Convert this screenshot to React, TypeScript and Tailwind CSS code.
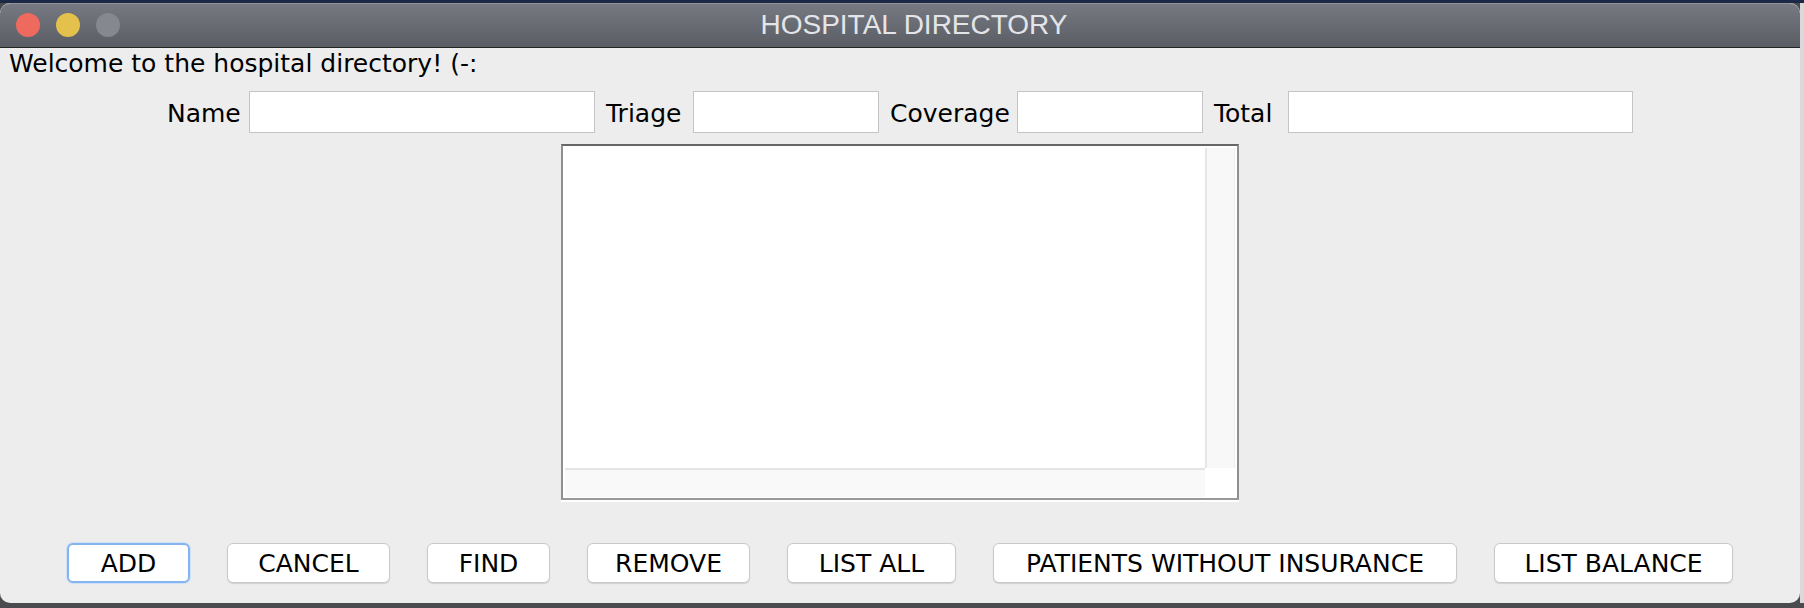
const font = "font-['DejaVu_Sans','Lucida_Grande',sans-serif]";

type Field = {
  label: string;
  labelWidth: string;
  fieldWidth: string;
};

const fields: Field[] = [
  { label: "Name", labelWidth: "w-[71px]", fieldWidth: "w-[346px]" },
  { label: "Triage", labelWidth: "w-[76px]", fieldWidth: "w-[186px]" },
  { label: "Coverage", labelWidth: "w-[116px]", fieldWidth: "w-[186px]" },
  { label: "Total", labelWidth: "w-[63px]", fieldWidth: "w-[345px]" },
];

type Action = {
  label: string;
  width: string;
  focused?: boolean;
};

const actions: Action[] = [
  { label: "ADD", width: "w-[123px]", focused: true },
  { label: "CANCEL", width: "w-[163px]" },
  { label: "FIND", width: "w-[123px]" },
  { label: "REMOVE", width: "w-[163px]" },
  { label: "LIST ALL", width: "w-[169px]" },
  { label: "PATIENTS WITHOUT INSURANCE", width: "w-[464px]" },
  { label: "LIST BALANCE", width: "w-[239px]" },
];

function TitleBar() {
  return (
    <div className="grid h-[45px] grid-cols-[1fr_auto_1fr] items-center rounded-t-[10px] border-b border-[#232323] bg-gradient-to-b from-[#777a82] to-[#5a5d64] shadow-[inset_0_1px_0_rgba(255,255,255,0.18)]">
      <div className="flex items-center gap-[16px] pl-[16px]">
        <span className="h-[24px] w-[24px] rounded-full bg-[#ee6a5f]" />
        <span className="h-[24px] w-[24px] rounded-full bg-[#e4c04d]" />
        <span className="h-[24px] w-[24px] rounded-full bg-[#85888e]" />
      </div>
      <div className="ml-[28px] font-['Liberation_Sans',Arial,sans-serif] text-[28px] leading-[30px] text-[#e4e5e9]">
        HOSPITAL DIRECTORY
      </div>
      <div />
    </div>
  );
}

function ListBox() {
  return (
    <div className="flex flex-col">
      <div className="flex h-[356px] w-[678px] flex-col border-x-2 border-t-2 border-b-2 border-x-[#8f8f8f] border-t-[#666666] border-b-[#999999] bg-white">
        <div className="flex flex-1">
          <div className="flex-1" />
          <div className="mt-[2px] w-[30px] border-l-2 border-r border-l-[#e6e6e6] border-r-[#eeeeee] bg-[#f8f8f8]" />
          <div className="w-[2px]" />
        </div>
        <div className="flex h-[30px]">
          <div className="mb-[1px] ml-[2px] flex-1 border-t-2 border-[#e4e4e4] bg-[#f9f9f9]" />
          <div className="w-[32px] bg-white" />
        </div>
      </div>
      <div className="h-[2px] w-[678px] bg-white" />
    </div>
  );
}

export default function App() {
  return (
    <div className={`flex h-[608px] w-[1804px] flex-col overflow-hidden bg-[#4a4b4e] ${font}`}>
      <div className="h-[3px] bg-[#1b2846]" />
      <div className="flex">
        <div className="flex h-[600px] w-[1800px] flex-col overflow-hidden rounded-[10px] bg-[#ededed]">
          <TitleBar />
          <div className="flex flex-1 flex-col text-[25px] leading-[29px] text-black">
            <p className="mt-[1px] pl-[9px]">Welcome to the hospital directory! (-:</p>

            <div className="mt-[13px] flex items-center justify-center gap-[11px]">
              {fields.map((field) => (
                <div key={field.label} className="flex items-center gap-[11px]">
                  <span className={`${field.labelWidth} whitespace-nowrap pt-[2px]`}>{field.label}</span>
                  <div className={`${field.fieldWidth} h-[42px] border border-[#c4c4c4] bg-white`} />
                </div>
              ))}
            </div>

            <div className="mt-[11px] flex justify-center">
              <ListBox />
            </div>

            <div className="mt-[41px] flex justify-center gap-[37px]">
              {actions.map((action) => (
                <button
                  key={action.label}
                  type="button"
                  className={`${action.width} flex h-[40px] items-center justify-center whitespace-nowrap rounded-[6px] bg-white text-black ${
                    action.focused
                      ? "border-2 border-[#86b4ee] shadow-[0_0_0_1px_#cfe1f8]"
                      : "border border-[#c9c9c9] shadow-[0_1px_1px_rgba(0,0,0,0.12)]"
                  }`}
                >
                  {action.label}
                </button>
              ))}
            </div>
          </div>
        </div>
        <div className="h-[600px] w-[4px] bg-[#d9d9d9]" />
      </div>
    </div>
  );
}
